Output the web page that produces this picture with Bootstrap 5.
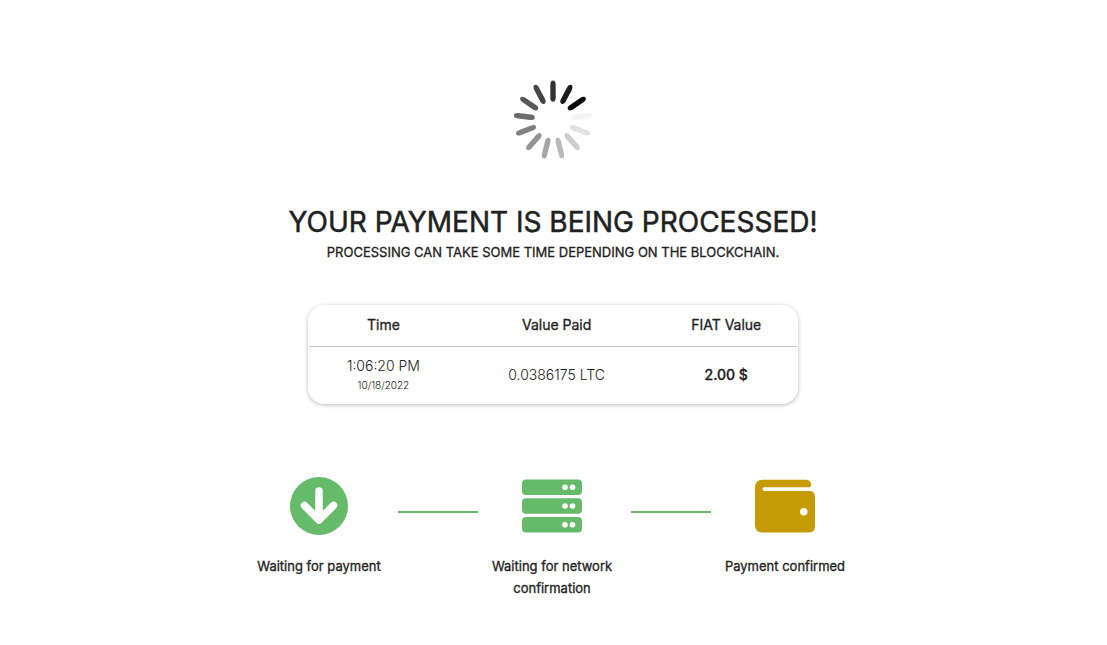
<!DOCTYPE html>
<html lang="en">
<head>
<meta charset="utf-8">
<meta name="viewport" content="width=device-width, initial-scale=1">
<title>Payment processing</title>
<link href="https://cdn.jsdelivr.net/npm/bootstrap@5.3.0/dist/css/bootstrap.min.css" rel="stylesheet">
<style>
  body { font-family: Inter, sans-serif; color: #212121; background: #fff; }
  .page { padding: 80px 13px 0 12px; }
  .spinner { width: 80px; height: 80px; margin-bottom: 40px; }
  .headline, .subline, .receipt th, .receipt .fiat, .step { -webkit-text-stroke: .3px; font-weight: 400; }
  .headline { font-size: 28px; line-height: 44px; -webkit-text-stroke-width: .5px; }
  .subline { font-size: 13px; line-height: 16px; }
  .receipt { width: 490px; max-width: 100%; margin-top: 45px; padding: 0 1px 1px; border-radius: 16px; box-shadow: 0 1px 4px rgba(0,0,0,.28); }
  .receipt table { font-size: 14px; line-height: 20px; table-layout: fixed; font-weight: 300; }
  .receipt th { height: 41px; padding-top: 1px; border-bottom: 1px solid #c4c4c4; }
  .receipt td { height: 57px; }
  .receipt .fiat { font-weight: 500; }
  .receipt .date { font-size: 10px; line-height: 18px; }
  .steps { margin-top: 72px; padding-right: 2px; }
  .step { width: 148px; font-size: 13px; line-height: 22px; }
  .step svg { width: 60px; height: 60px; margin-bottom: 19px; }
  .link-line { width: 80px; height: 2px; margin: 35px 0 0 5px; background: #66bb6a; }
</style>
</head>
<body>
<main class="page container-fluid d-flex flex-column align-items-center text-center">
  <svg class="spinner" viewBox="-40 -40 80 80" role="img" aria-label="Loading">
    <defs><path id="blade" d="M0-39.500C1.800-39.500 2.700-37.500 2.700-35V-22.500C2.700-20 1.800-18.300 0-18.300S-2.700-20-2.700-22.500V-35C-2.700-37.500-1.800-39.500 0-39.500Z"/></defs>
    <use href="#blade" fill="#333"/>
    <use href="#blade" fill="#1c1c1c" transform="rotate(27.7)"/>
    <use href="#blade" fill="#060606" transform="rotate(55.4)"/>
    <use href="#blade" fill="#f3f3f3" transform="rotate(83.1)"/>
    <use href="#blade" fill="#e1e1e1" transform="rotate(110.8)"/>
    <use href="#blade" fill="#cdcdcd" transform="rotate(138.5)"/>
    <use href="#blade" fill="#b9b9b9" transform="rotate(166.2)"/>
    <use href="#blade" fill="#a5a5a5" transform="rotate(193.8)"/>
    <use href="#blade" fill="#939393" transform="rotate(221.5)"/>
    <use href="#blade" fill="#808080" transform="rotate(249.2)"/>
    <use href="#blade" fill="#6b6b6b" transform="rotate(276.9)"/>
    <use href="#blade" fill="#585858" transform="rotate(304.6)"/>
    <use href="#blade" fill="#454545" transform="rotate(332.3)"/>
  </svg>
  <h1 class="headline mb-0">YOUR PAYMENT IS BEING PROCESSED!</h1>
  <p class="subline mb-0">PROCESSING CAN TAKE SOME TIME DEPENDING ON THE BLOCKCHAIN.</p>

  <section class="receipt">
    <table class="w-100 align-middle">
      <colgroup><col style="width:30.5%"><col style="width:40.5%"><col style="width:29%"></colgroup>
      <thead><tr><th scope="col">Time</th><th scope="col">Value Paid</th><th scope="col">FIAT Value</th></tr></thead>
      <tbody><tr>
        <td>1:06:20 PM<div class="date">10/18/2022</div></td>
        <td>0.0386175 LTC</td>
        <td class="fiat">2.00 $</td>
      </tr></tbody>
    </table>
  </section>

  <section class="steps d-flex justify-content-center">
    <div class="step d-flex flex-column align-items-center">
      <svg viewBox="0 0 60 60" aria-hidden="true"><circle cx="30" cy="30" r="29" fill="#66bb6a"/><path d="M30 15V43M15.500 29.500 30 44 44.500 29.500" fill="none" stroke="#fff" stroke-width="7.500" stroke-linecap="round" stroke-linejoin="round"/></svg>
      <span>Waiting for payment</span>
    </div>
    <div class="link-line"></div>
    <div class="step d-flex flex-column align-items-center">
      <svg viewBox="0 0 60 60" aria-hidden="true"><g fill="#66bb6a"><rect y="3.500" width="60" height="15.500" rx="4"/><rect y="22.300" width="60" height="15.500" rx="4"/><rect y="41" width="60" height="15.500" rx="4"/></g><g fill="#fff"><circle cx="43" cy="11.300" r="2.800"/><circle cx="50.500" cy="11.300" r="2.800"/><circle cx="43" cy="30" r="2.800"/><circle cx="50.500" cy="30" r="2.800"/><circle cx="43" cy="48.800" r="2.800"/><circle cx="50.500" cy="48.800" r="2.800"/></g></svg>
      <span>Waiting for network confirmation</span>
    </div>
    <div class="link-line"></div>
    <div class="step d-flex flex-column align-items-center">
      <svg viewBox="0 0 60 60" aria-hidden="true"><path fill="#c69a04" fill-rule="evenodd" d="M7.500 3.700H50.500Q56.200 3.700 56.200 9.300A1.900 1.900 0 0 1 54.300 11.200H9.400A1.900 1.900 0 0 0 9.400 15H54.400Q60 15 60 20.600V50.800Q60 56.400 54.400 56.400H7.500Q0 56.400 0 48.900V11.200Q0 3.700 7.500 3.700ZM48.800 32A3.750 3.750 0 1 0 48.800 39.500 3.750 3.750 0 1 0 48.800 32Z"/></svg>
      <span>Payment confirmed</span>
    </div>
  </section>
</main>
<script src="https://cdn.jsdelivr.net/npm/bootstrap@5.3.0/dist/js/bootstrap.bundle.min.js"></script>
</body>
</html>
